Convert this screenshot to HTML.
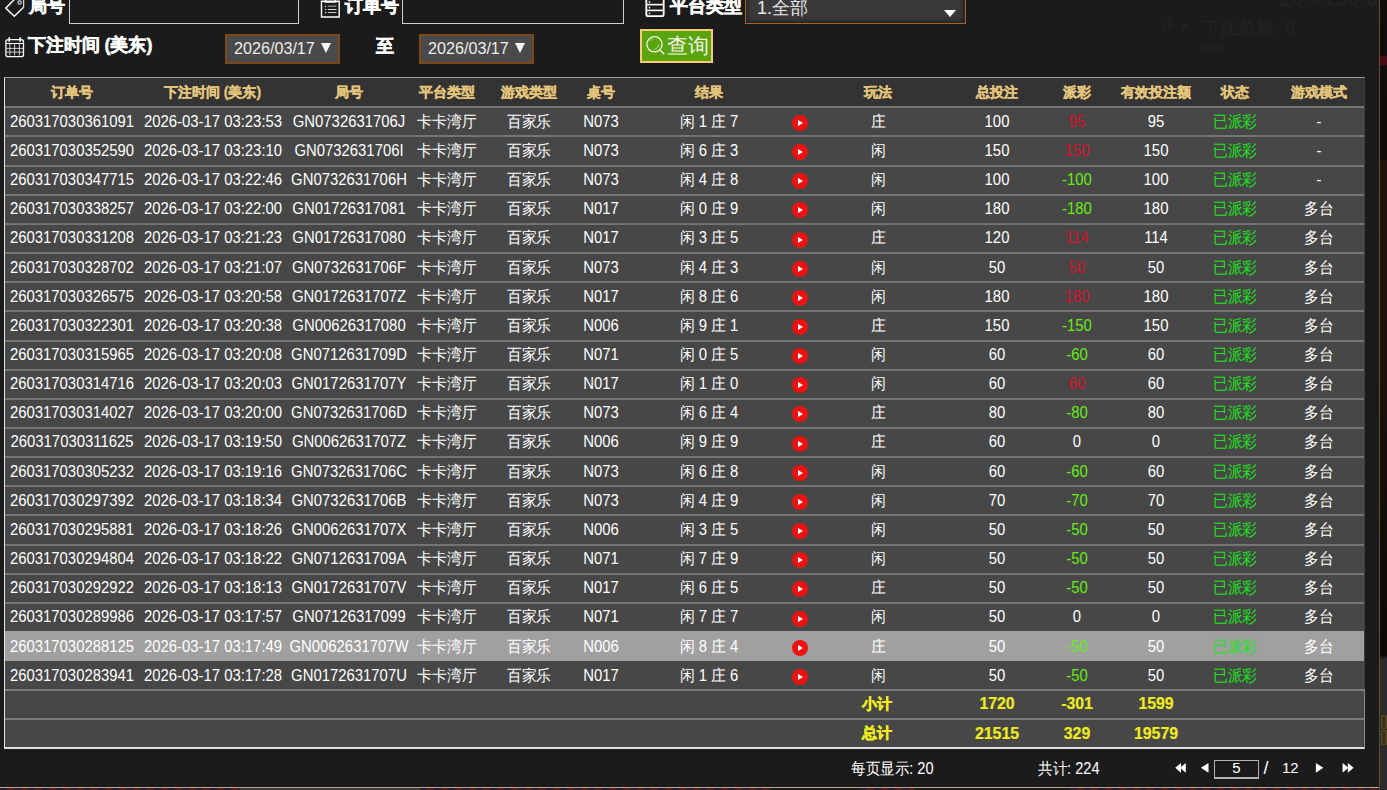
<!DOCTYPE html><html><head><meta charset="utf-8"><style>
html,body{margin:0;padding:0;}
body{width:1387px;height:790px;overflow:hidden;position:relative;background:#1b1b1b;font-family:"Liberation Sans",sans-serif;color:#fff;}
.abs{position:absolute;}
.lbl{position:absolute;font-weight:bold;font-size:18px;color:#fff;white-space:nowrap;line-height:20px;-webkit-text-stroke:0.5px #fff;}
.inp{position:absolute;border:1px solid #cfcfcf;background:#1b1b1b;box-sizing:border-box;}
.date{position:absolute;box-sizing:border-box;border:2px solid #7c4818;background:#4a4a4a;color:#eee;font-size:16px;line-height:26px;padding-left:8px;white-space:nowrap;}
#tbl{position:absolute;left:4px;top:77px;width:1361px;height:672px;box-sizing:border-box;border:1px solid #9a9a9a;border-left-color:#e6e6e6;border-bottom:2px solid #dedede;border-right:1px solid #3c3c3c;background:#474747;}
.hd{position:absolute;left:0;right:0;top:0;height:29px;background:#333;}
.row{position:absolute;left:0;right:0;height:29.15px;}
.sep{position:absolute;left:0;right:0;height:2px;background:#747474;}
.c{position:absolute;text-align:center;white-space:nowrap;font-size:16px;line-height:20px;transform:scaleX(0.93);}
.hd .c{transform:none}
.hd .c{color:#e3c47c;font-weight:bold;font-size:14px;-webkit-text-stroke:0.35px #e3c47c;}
.r{color:#d4122e}.g{color:#66ec16}.w{color:#fff}.st{color:#1ae41a}
.y{color:#f0ec1e;font-weight:bold}
.play{position:absolute;width:16px;height:16px;border-radius:50%;background:#ee1111;}
.play:after{content:"";position:absolute;left:6px;top:5px;border-left:5.5px solid #fff;border-top:3px solid transparent;border-bottom:3px solid transparent;}
</style></head><body>

<span class="abs" style="left:1279px;top:-14px;font-size:22px;font-weight:bold;color:#212121;white-space:nowrap">20 - 100,000</span>
<span class="abs" style="left:1202px;top:16px;font-size:18px;font-weight:bold;color:#212121;white-space:nowrap">下注总额: 0</span>
<span class="abs" style="left:1160px;top:16px;font-size:16px;font-weight:bold;color:#212121;white-space:nowrap">开 ●</span>
<span class="abs" style="left:1200px;top:42px;font-size:12px;font-weight:bold;color:#212121;white-space:nowrap">84%</span>
<svg class="abs" style="left:0;top:0" width="30" height="22" viewBox="0 0 30 22"><path d="M15.8 -2 L5.8 8.1 L14.3 16.3 L23.6 7.2" fill="none" stroke="#f4f4f4" stroke-width="1.5" stroke-linejoin="round"/><path d="M23.6 7.4 L23.6 -2" fill="none" stroke="#d8d8d8" stroke-width="1.3"/><circle cx="19.6" cy="2.6" r="1.7" fill="none" stroke="#ddd" stroke-width="1.1"/></svg>
<svg class="abs" style="left:315px;top:0" width="30" height="22" viewBox="315 0 30 22"><path d="M321.5 1.2 H339.2 V17 H321.5 Z" fill="none" stroke="#fff" stroke-width="1.4"/><path d="M325 2.2 Q325.5 0 327 -1 H334 Q335.5 0 336 2.2 Z" fill="none" stroke="#fff" stroke-width="1.2"/><g stroke-width="1.2" stroke-linecap="round"><line x1="328.3" y1="6.1" x2="336" y2="6.1" stroke="#999"/><line x1="328.3" y1="9.5" x2="336" y2="9.5" stroke="#ddd"/><line x1="328.3" y1="12.5" x2="336" y2="12.5" stroke="#ccc"/></g><circle cx="325.6" cy="6.2" r="0.8" fill="#ddd"/><circle cx="325.6" cy="9.5" r="0.8" fill="#ddd"/><circle cx="325.6" cy="12.6" r="0.8" fill="#ddd"/></svg>
<svg class="abs" style="left:640px;top:0" width="30" height="22" viewBox="640 0 30 22"><rect x="646.3" y="-3" width="17.4" height="19.2" rx="2" fill="none" stroke="#fff" stroke-width="1.8"/><line x1="646" y1="4.6" x2="664" y2="4.6" stroke="#fff" stroke-width="1.6"/><line x1="646" y1="10.4" x2="664" y2="10.4" stroke="#fff" stroke-width="1.6"/><circle cx="649.5" cy="2" r="0.9" fill="#ddd"/><circle cx="649.5" cy="7.5" r="0.9" fill="#ddd"/><circle cx="649.5" cy="13.3" r="0.9" fill="#ddd"/></svg>
<svg class="abs" style="left:0;top:30px" width="30" height="32" viewBox="0 30 30 32"><rect x="5.9" y="39.6" width="17.6" height="17" rx="2.2" fill="none" stroke="#fff" stroke-width="1.3"/><line x1="5.9" y1="43.5" x2="23.5" y2="43.5" stroke="#fff" stroke-width="1.1"/><line x1="9.2" y1="37.3" x2="9.2" y2="41.8" stroke="#fff" stroke-width="1.6"/><line x1="20.2" y1="37.3" x2="20.2" y2="41.8" stroke="#fff" stroke-width="1.6"/><g stroke="#ddd" stroke-width="0.9"><line x1="9.9" y1="44" x2="9.9" y2="55.5"/><line x1="14.6" y1="44" x2="14.6" y2="55.5"/><line x1="19.4" y1="44" x2="19.4" y2="55.5"/><line x1="6.5" y1="48.4" x2="23" y2="48.4"/><line x1="6.5" y1="52.1" x2="23" y2="52.1"/></g></svg>
<div class="inp" style="left:69px;top:-10px;width:230px;height:34px"></div>
<div class="inp" style="left:402px;top:-10px;width:221.5px;height:34px"></div>
<div class="lbl" style="left:29px;top:-4px">局号</div>
<div class="lbl" style="left:345px;top:-4px">订单号</div>
<div class="lbl" style="left:670px;top:-4px">平台类型</div>
<div class="lbl" style="left:27.5px;top:35px">下注时间 (美东)</div>
<div class="lbl" style="left:375.5px;top:36px">至</div>
<div class="date" style="left:225px;top:34px;width:115px;height:30px"><span class="abs" style="left:7px;top:1px;font-size:17px;line-height:24px;transform:scaleX(0.95);transform-origin:0 0;color:#ececec">2026/03/17</span><span class="abs" style="left:93.5px;top:7px;width:0;height:0;border-left:5.5px solid transparent;border-right:5.5px solid transparent;border-top:10.5px solid #f8f8f8"></span></div>
<div class="date" style="left:419px;top:34px;width:115px;height:30px"><span class="abs" style="left:7px;top:1px;font-size:17px;line-height:24px;transform:scaleX(0.95);transform-origin:0 0;color:#ececec">2026/03/17</span><span class="abs" style="left:93.5px;top:7px;width:0;height:0;border-left:5.5px solid transparent;border-right:5.5px solid transparent;border-top:10.5px solid #f8f8f8"></span></div>
<div class="abs" style="left:745px;top:-8px;width:221px;height:32px;box-sizing:border-box;border:1px solid #a0642a;background:#3a3a3a;box-shadow:inset 0 0 6px #111"><span class="abs" style="left:11px;top:5px;font-size:18px;line-height:20px;color:#e6e6e6">1.全部</span><span class="abs" style="left:198px;top:16.5px;width:0;height:0;border-left:6px solid transparent;border-right:6px solid transparent;border-top:7px solid #fff"></span></div>
<div class="abs" style="left:640px;top:29px;width:73px;height:34px;box-sizing:border-box;border:2px solid #ffc97c;background:#5aa40e;"><svg class="abs" style="left:0;top:0" width="69" height="30" viewBox="642 31 69 30"><circle cx="654.5" cy="44.3" r="7.6" fill="none" stroke="#f4f4e8" stroke-width="1.3"/><line x1="659.8" y1="49.8" x2="664.3" y2="54.3" stroke="#f4f4e8" stroke-width="1.4"/><path d="M650.5 40.8 Q651.5 39.5 653 39" fill="none" stroke="#dde8c8" stroke-width="0.8"/><path d="M659 44.5 Q658.5 48 654.5 49.5" fill="none" stroke="#dde8c8" stroke-width="0.8"/></svg><span class="abs" style="left:25px;top:1.5px;font-size:21px;line-height:26px;color:#f4f4e8">查询</span></div>
<div id="tbl">
<div class="hd">
<span class="c " style="top:4px;left:-33.50px;width:200px">订单号</span>
<span class="c " style="top:4px;left:107.50px;width:200px">下注时间 (美东)</span>
<span class="c " style="top:4px;left:244.00px;width:200px">局号</span>
<span class="c " style="top:4px;left:342.00px;width:200px">平台类型</span>
<span class="c " style="top:4px;left:424.00px;width:200px">游戏类型</span>
<span class="c " style="top:4px;left:496.00px;width:200px">桌号</span>
<span class="c " style="top:4px;left:604.00px;width:200px">结果</span>
<span class="c " style="top:4px;left:773.00px;width:200px">玩法</span>
<span class="c " style="top:4px;left:892.00px;width:200px">总投注</span>
<span class="c " style="top:4px;left:972.00px;width:200px">派彩</span>
<span class="c " style="top:4px;left:1051.00px;width:200px">有效投注额</span>
<span class="c " style="top:4px;left:1130.00px;width:200px">状态</span>
<span class="c " style="top:4px;left:1214.00px;width:200px">游戏模式</span>
</div>
<div class="row" style="top:28.30px;">
<span class="c " style="top:5.5px;left:-33.50px;width:200px">260317030361091</span>
<span class="c " style="top:5.5px;left:107.50px;width:200px">2026-03-17 03:23:53</span>
<span class="c " style="top:5.5px;left:244.00px;width:200px">GN0732631706J</span>
<span class="c " style="top:5.5px;left:342.00px;width:200px">卡卡湾厅</span>
<span class="c " style="top:5.5px;left:424.00px;width:200px">百家乐</span>
<span class="c " style="top:5.5px;left:496.00px;width:200px">N073</span>
<span class="c " style="top:5.5px;left:604.00px;width:200px">闲 1 庄 7</span>
<span class="play" style="left:787.0px;top:8.7px"></span>
<span class="c " style="top:5.5px;left:773.00px;width:200px">庄</span>
<span class="c " style="top:5.5px;left:892.00px;width:200px">100</span>
<span class="c r" style="top:5.5px;left:972.00px;width:200px">95</span>
<span class="c " style="top:5.5px;left:1051.00px;width:200px">95</span>
<span class="c st" style="top:5.5px;left:1130.00px;width:200px">已派彩</span>
<span class="c " style="top:5.5px;left:1214.00px;width:200px">-</span>
</div>
<div class="sep" style="top:28.30px"></div>
<div class="row" style="top:57.45px;">
<span class="c " style="top:5.5px;left:-33.50px;width:200px">260317030352590</span>
<span class="c " style="top:5.5px;left:107.50px;width:200px">2026-03-17 03:23:10</span>
<span class="c " style="top:5.5px;left:244.00px;width:200px">GN0732631706I</span>
<span class="c " style="top:5.5px;left:342.00px;width:200px">卡卡湾厅</span>
<span class="c " style="top:5.5px;left:424.00px;width:200px">百家乐</span>
<span class="c " style="top:5.5px;left:496.00px;width:200px">N073</span>
<span class="c " style="top:5.5px;left:604.00px;width:200px">闲 6 庄 3</span>
<span class="play" style="left:787.0px;top:8.7px"></span>
<span class="c " style="top:5.5px;left:773.00px;width:200px">闲</span>
<span class="c " style="top:5.5px;left:892.00px;width:200px">150</span>
<span class="c r" style="top:5.5px;left:972.00px;width:200px">150</span>
<span class="c " style="top:5.5px;left:1051.00px;width:200px">150</span>
<span class="c st" style="top:5.5px;left:1130.00px;width:200px">已派彩</span>
<span class="c " style="top:5.5px;left:1214.00px;width:200px">-</span>
</div>
<div class="sep" style="top:57.45px"></div>
<div class="row" style="top:86.60px;">
<span class="c " style="top:5.5px;left:-33.50px;width:200px">260317030347715</span>
<span class="c " style="top:5.5px;left:107.50px;width:200px">2026-03-17 03:22:46</span>
<span class="c " style="top:5.5px;left:244.00px;width:200px">GN0732631706H</span>
<span class="c " style="top:5.5px;left:342.00px;width:200px">卡卡湾厅</span>
<span class="c " style="top:5.5px;left:424.00px;width:200px">百家乐</span>
<span class="c " style="top:5.5px;left:496.00px;width:200px">N073</span>
<span class="c " style="top:5.5px;left:604.00px;width:200px">闲 4 庄 8</span>
<span class="play" style="left:787.0px;top:8.7px"></span>
<span class="c " style="top:5.5px;left:773.00px;width:200px">闲</span>
<span class="c " style="top:5.5px;left:892.00px;width:200px">100</span>
<span class="c g" style="top:5.5px;left:972.00px;width:200px">-100</span>
<span class="c " style="top:5.5px;left:1051.00px;width:200px">100</span>
<span class="c st" style="top:5.5px;left:1130.00px;width:200px">已派彩</span>
<span class="c " style="top:5.5px;left:1214.00px;width:200px">-</span>
</div>
<div class="sep" style="top:86.60px"></div>
<div class="row" style="top:115.75px;">
<span class="c " style="top:5.5px;left:-33.50px;width:200px">260317030338257</span>
<span class="c " style="top:5.5px;left:107.50px;width:200px">2026-03-17 03:22:00</span>
<span class="c " style="top:5.5px;left:244.00px;width:200px">GN01726317081</span>
<span class="c " style="top:5.5px;left:342.00px;width:200px">卡卡湾厅</span>
<span class="c " style="top:5.5px;left:424.00px;width:200px">百家乐</span>
<span class="c " style="top:5.5px;left:496.00px;width:200px">N017</span>
<span class="c " style="top:5.5px;left:604.00px;width:200px">闲 0 庄 9</span>
<span class="play" style="left:787.0px;top:8.7px"></span>
<span class="c " style="top:5.5px;left:773.00px;width:200px">闲</span>
<span class="c " style="top:5.5px;left:892.00px;width:200px">180</span>
<span class="c g" style="top:5.5px;left:972.00px;width:200px">-180</span>
<span class="c " style="top:5.5px;left:1051.00px;width:200px">180</span>
<span class="c st" style="top:5.5px;left:1130.00px;width:200px">已派彩</span>
<span class="c " style="top:5.5px;left:1214.00px;width:200px">多台</span>
</div>
<div class="sep" style="top:115.75px"></div>
<div class="row" style="top:144.90px;">
<span class="c " style="top:5.5px;left:-33.50px;width:200px">260317030331208</span>
<span class="c " style="top:5.5px;left:107.50px;width:200px">2026-03-17 03:21:23</span>
<span class="c " style="top:5.5px;left:244.00px;width:200px">GN01726317080</span>
<span class="c " style="top:5.5px;left:342.00px;width:200px">卡卡湾厅</span>
<span class="c " style="top:5.5px;left:424.00px;width:200px">百家乐</span>
<span class="c " style="top:5.5px;left:496.00px;width:200px">N017</span>
<span class="c " style="top:5.5px;left:604.00px;width:200px">闲 3 庄 5</span>
<span class="play" style="left:787.0px;top:8.7px"></span>
<span class="c " style="top:5.5px;left:773.00px;width:200px">庄</span>
<span class="c " style="top:5.5px;left:892.00px;width:200px">120</span>
<span class="c r" style="top:5.5px;left:972.00px;width:200px">114</span>
<span class="c " style="top:5.5px;left:1051.00px;width:200px">114</span>
<span class="c st" style="top:5.5px;left:1130.00px;width:200px">已派彩</span>
<span class="c " style="top:5.5px;left:1214.00px;width:200px">多台</span>
</div>
<div class="sep" style="top:144.90px"></div>
<div class="row" style="top:174.05px;">
<span class="c " style="top:5.5px;left:-33.50px;width:200px">260317030328702</span>
<span class="c " style="top:5.5px;left:107.50px;width:200px">2026-03-17 03:21:07</span>
<span class="c " style="top:5.5px;left:244.00px;width:200px">GN0732631706F</span>
<span class="c " style="top:5.5px;left:342.00px;width:200px">卡卡湾厅</span>
<span class="c " style="top:5.5px;left:424.00px;width:200px">百家乐</span>
<span class="c " style="top:5.5px;left:496.00px;width:200px">N073</span>
<span class="c " style="top:5.5px;left:604.00px;width:200px">闲 4 庄 3</span>
<span class="play" style="left:787.0px;top:8.7px"></span>
<span class="c " style="top:5.5px;left:773.00px;width:200px">闲</span>
<span class="c " style="top:5.5px;left:892.00px;width:200px">50</span>
<span class="c r" style="top:5.5px;left:972.00px;width:200px">50</span>
<span class="c " style="top:5.5px;left:1051.00px;width:200px">50</span>
<span class="c st" style="top:5.5px;left:1130.00px;width:200px">已派彩</span>
<span class="c " style="top:5.5px;left:1214.00px;width:200px">多台</span>
</div>
<div class="sep" style="top:174.05px"></div>
<div class="row" style="top:203.20px;">
<span class="c " style="top:5.5px;left:-33.50px;width:200px">260317030326575</span>
<span class="c " style="top:5.5px;left:107.50px;width:200px">2026-03-17 03:20:58</span>
<span class="c " style="top:5.5px;left:244.00px;width:200px">GN0172631707Z</span>
<span class="c " style="top:5.5px;left:342.00px;width:200px">卡卡湾厅</span>
<span class="c " style="top:5.5px;left:424.00px;width:200px">百家乐</span>
<span class="c " style="top:5.5px;left:496.00px;width:200px">N017</span>
<span class="c " style="top:5.5px;left:604.00px;width:200px">闲 8 庄 6</span>
<span class="play" style="left:787.0px;top:8.7px"></span>
<span class="c " style="top:5.5px;left:773.00px;width:200px">闲</span>
<span class="c " style="top:5.5px;left:892.00px;width:200px">180</span>
<span class="c r" style="top:5.5px;left:972.00px;width:200px">180</span>
<span class="c " style="top:5.5px;left:1051.00px;width:200px">180</span>
<span class="c st" style="top:5.5px;left:1130.00px;width:200px">已派彩</span>
<span class="c " style="top:5.5px;left:1214.00px;width:200px">多台</span>
</div>
<div class="sep" style="top:203.20px"></div>
<div class="row" style="top:232.35px;">
<span class="c " style="top:5.5px;left:-33.50px;width:200px">260317030322301</span>
<span class="c " style="top:5.5px;left:107.50px;width:200px">2026-03-17 03:20:38</span>
<span class="c " style="top:5.5px;left:244.00px;width:200px">GN00626317080</span>
<span class="c " style="top:5.5px;left:342.00px;width:200px">卡卡湾厅</span>
<span class="c " style="top:5.5px;left:424.00px;width:200px">百家乐</span>
<span class="c " style="top:5.5px;left:496.00px;width:200px">N006</span>
<span class="c " style="top:5.5px;left:604.00px;width:200px">闲 9 庄 1</span>
<span class="play" style="left:787.0px;top:8.7px"></span>
<span class="c " style="top:5.5px;left:773.00px;width:200px">庄</span>
<span class="c " style="top:5.5px;left:892.00px;width:200px">150</span>
<span class="c g" style="top:5.5px;left:972.00px;width:200px">-150</span>
<span class="c " style="top:5.5px;left:1051.00px;width:200px">150</span>
<span class="c st" style="top:5.5px;left:1130.00px;width:200px">已派彩</span>
<span class="c " style="top:5.5px;left:1214.00px;width:200px">多台</span>
</div>
<div class="sep" style="top:232.35px"></div>
<div class="row" style="top:261.50px;">
<span class="c " style="top:5.5px;left:-33.50px;width:200px">260317030315965</span>
<span class="c " style="top:5.5px;left:107.50px;width:200px">2026-03-17 03:20:08</span>
<span class="c " style="top:5.5px;left:244.00px;width:200px">GN0712631709D</span>
<span class="c " style="top:5.5px;left:342.00px;width:200px">卡卡湾厅</span>
<span class="c " style="top:5.5px;left:424.00px;width:200px">百家乐</span>
<span class="c " style="top:5.5px;left:496.00px;width:200px">N071</span>
<span class="c " style="top:5.5px;left:604.00px;width:200px">闲 0 庄 5</span>
<span class="play" style="left:787.0px;top:8.7px"></span>
<span class="c " style="top:5.5px;left:773.00px;width:200px">闲</span>
<span class="c " style="top:5.5px;left:892.00px;width:200px">60</span>
<span class="c g" style="top:5.5px;left:972.00px;width:200px">-60</span>
<span class="c " style="top:5.5px;left:1051.00px;width:200px">60</span>
<span class="c st" style="top:5.5px;left:1130.00px;width:200px">已派彩</span>
<span class="c " style="top:5.5px;left:1214.00px;width:200px">多台</span>
</div>
<div class="sep" style="top:261.50px"></div>
<div class="row" style="top:290.65px;">
<span class="c " style="top:5.5px;left:-33.50px;width:200px">260317030314716</span>
<span class="c " style="top:5.5px;left:107.50px;width:200px">2026-03-17 03:20:03</span>
<span class="c " style="top:5.5px;left:244.00px;width:200px">GN0172631707Y</span>
<span class="c " style="top:5.5px;left:342.00px;width:200px">卡卡湾厅</span>
<span class="c " style="top:5.5px;left:424.00px;width:200px">百家乐</span>
<span class="c " style="top:5.5px;left:496.00px;width:200px">N017</span>
<span class="c " style="top:5.5px;left:604.00px;width:200px">闲 1 庄 0</span>
<span class="play" style="left:787.0px;top:8.7px"></span>
<span class="c " style="top:5.5px;left:773.00px;width:200px">闲</span>
<span class="c " style="top:5.5px;left:892.00px;width:200px">60</span>
<span class="c r" style="top:5.5px;left:972.00px;width:200px">60</span>
<span class="c " style="top:5.5px;left:1051.00px;width:200px">60</span>
<span class="c st" style="top:5.5px;left:1130.00px;width:200px">已派彩</span>
<span class="c " style="top:5.5px;left:1214.00px;width:200px">多台</span>
</div>
<div class="sep" style="top:290.65px"></div>
<div class="row" style="top:319.80px;">
<span class="c " style="top:5.5px;left:-33.50px;width:200px">260317030314027</span>
<span class="c " style="top:5.5px;left:107.50px;width:200px">2026-03-17 03:20:00</span>
<span class="c " style="top:5.5px;left:244.00px;width:200px">GN0732631706D</span>
<span class="c " style="top:5.5px;left:342.00px;width:200px">卡卡湾厅</span>
<span class="c " style="top:5.5px;left:424.00px;width:200px">百家乐</span>
<span class="c " style="top:5.5px;left:496.00px;width:200px">N073</span>
<span class="c " style="top:5.5px;left:604.00px;width:200px">闲 6 庄 4</span>
<span class="play" style="left:787.0px;top:8.7px"></span>
<span class="c " style="top:5.5px;left:773.00px;width:200px">庄</span>
<span class="c " style="top:5.5px;left:892.00px;width:200px">80</span>
<span class="c g" style="top:5.5px;left:972.00px;width:200px">-80</span>
<span class="c " style="top:5.5px;left:1051.00px;width:200px">80</span>
<span class="c st" style="top:5.5px;left:1130.00px;width:200px">已派彩</span>
<span class="c " style="top:5.5px;left:1214.00px;width:200px">多台</span>
</div>
<div class="sep" style="top:319.80px"></div>
<div class="row" style="top:348.95px;">
<span class="c " style="top:5.5px;left:-33.50px;width:200px">260317030311625</span>
<span class="c " style="top:5.5px;left:107.50px;width:200px">2026-03-17 03:19:50</span>
<span class="c " style="top:5.5px;left:244.00px;width:200px">GN0062631707Z</span>
<span class="c " style="top:5.5px;left:342.00px;width:200px">卡卡湾厅</span>
<span class="c " style="top:5.5px;left:424.00px;width:200px">百家乐</span>
<span class="c " style="top:5.5px;left:496.00px;width:200px">N006</span>
<span class="c " style="top:5.5px;left:604.00px;width:200px">闲 9 庄 9</span>
<span class="play" style="left:787.0px;top:8.7px"></span>
<span class="c " style="top:5.5px;left:773.00px;width:200px">庄</span>
<span class="c " style="top:5.5px;left:892.00px;width:200px">60</span>
<span class="c w" style="top:5.5px;left:972.00px;width:200px">0</span>
<span class="c " style="top:5.5px;left:1051.00px;width:200px">0</span>
<span class="c st" style="top:5.5px;left:1130.00px;width:200px">已派彩</span>
<span class="c " style="top:5.5px;left:1214.00px;width:200px">多台</span>
</div>
<div class="sep" style="top:348.95px"></div>
<div class="row" style="top:378.10px;">
<span class="c " style="top:5.5px;left:-33.50px;width:200px">260317030305232</span>
<span class="c " style="top:5.5px;left:107.50px;width:200px">2026-03-17 03:19:16</span>
<span class="c " style="top:5.5px;left:244.00px;width:200px">GN0732631706C</span>
<span class="c " style="top:5.5px;left:342.00px;width:200px">卡卡湾厅</span>
<span class="c " style="top:5.5px;left:424.00px;width:200px">百家乐</span>
<span class="c " style="top:5.5px;left:496.00px;width:200px">N073</span>
<span class="c " style="top:5.5px;left:604.00px;width:200px">闲 6 庄 8</span>
<span class="play" style="left:787.0px;top:8.7px"></span>
<span class="c " style="top:5.5px;left:773.00px;width:200px">闲</span>
<span class="c " style="top:5.5px;left:892.00px;width:200px">60</span>
<span class="c g" style="top:5.5px;left:972.00px;width:200px">-60</span>
<span class="c " style="top:5.5px;left:1051.00px;width:200px">60</span>
<span class="c st" style="top:5.5px;left:1130.00px;width:200px">已派彩</span>
<span class="c " style="top:5.5px;left:1214.00px;width:200px">多台</span>
</div>
<div class="sep" style="top:378.10px"></div>
<div class="row" style="top:407.25px;">
<span class="c " style="top:5.5px;left:-33.50px;width:200px">260317030297392</span>
<span class="c " style="top:5.5px;left:107.50px;width:200px">2026-03-17 03:18:34</span>
<span class="c " style="top:5.5px;left:244.00px;width:200px">GN0732631706B</span>
<span class="c " style="top:5.5px;left:342.00px;width:200px">卡卡湾厅</span>
<span class="c " style="top:5.5px;left:424.00px;width:200px">百家乐</span>
<span class="c " style="top:5.5px;left:496.00px;width:200px">N073</span>
<span class="c " style="top:5.5px;left:604.00px;width:200px">闲 4 庄 9</span>
<span class="play" style="left:787.0px;top:8.7px"></span>
<span class="c " style="top:5.5px;left:773.00px;width:200px">闲</span>
<span class="c " style="top:5.5px;left:892.00px;width:200px">70</span>
<span class="c g" style="top:5.5px;left:972.00px;width:200px">-70</span>
<span class="c " style="top:5.5px;left:1051.00px;width:200px">70</span>
<span class="c st" style="top:5.5px;left:1130.00px;width:200px">已派彩</span>
<span class="c " style="top:5.5px;left:1214.00px;width:200px">多台</span>
</div>
<div class="sep" style="top:407.25px"></div>
<div class="row" style="top:436.40px;">
<span class="c " style="top:5.5px;left:-33.50px;width:200px">260317030295881</span>
<span class="c " style="top:5.5px;left:107.50px;width:200px">2026-03-17 03:18:26</span>
<span class="c " style="top:5.5px;left:244.00px;width:200px">GN0062631707X</span>
<span class="c " style="top:5.5px;left:342.00px;width:200px">卡卡湾厅</span>
<span class="c " style="top:5.5px;left:424.00px;width:200px">百家乐</span>
<span class="c " style="top:5.5px;left:496.00px;width:200px">N006</span>
<span class="c " style="top:5.5px;left:604.00px;width:200px">闲 3 庄 5</span>
<span class="play" style="left:787.0px;top:8.7px"></span>
<span class="c " style="top:5.5px;left:773.00px;width:200px">闲</span>
<span class="c " style="top:5.5px;left:892.00px;width:200px">50</span>
<span class="c g" style="top:5.5px;left:972.00px;width:200px">-50</span>
<span class="c " style="top:5.5px;left:1051.00px;width:200px">50</span>
<span class="c st" style="top:5.5px;left:1130.00px;width:200px">已派彩</span>
<span class="c " style="top:5.5px;left:1214.00px;width:200px">多台</span>
</div>
<div class="sep" style="top:436.40px"></div>
<div class="row" style="top:465.55px;">
<span class="c " style="top:5.5px;left:-33.50px;width:200px">260317030294804</span>
<span class="c " style="top:5.5px;left:107.50px;width:200px">2026-03-17 03:18:22</span>
<span class="c " style="top:5.5px;left:244.00px;width:200px">GN0712631709A</span>
<span class="c " style="top:5.5px;left:342.00px;width:200px">卡卡湾厅</span>
<span class="c " style="top:5.5px;left:424.00px;width:200px">百家乐</span>
<span class="c " style="top:5.5px;left:496.00px;width:200px">N071</span>
<span class="c " style="top:5.5px;left:604.00px;width:200px">闲 7 庄 9</span>
<span class="play" style="left:787.0px;top:8.7px"></span>
<span class="c " style="top:5.5px;left:773.00px;width:200px">闲</span>
<span class="c " style="top:5.5px;left:892.00px;width:200px">50</span>
<span class="c g" style="top:5.5px;left:972.00px;width:200px">-50</span>
<span class="c " style="top:5.5px;left:1051.00px;width:200px">50</span>
<span class="c st" style="top:5.5px;left:1130.00px;width:200px">已派彩</span>
<span class="c " style="top:5.5px;left:1214.00px;width:200px">多台</span>
</div>
<div class="sep" style="top:465.55px"></div>
<div class="row" style="top:494.70px;">
<span class="c " style="top:5.5px;left:-33.50px;width:200px">260317030292922</span>
<span class="c " style="top:5.5px;left:107.50px;width:200px">2026-03-17 03:18:13</span>
<span class="c " style="top:5.5px;left:244.00px;width:200px">GN0172631707V</span>
<span class="c " style="top:5.5px;left:342.00px;width:200px">卡卡湾厅</span>
<span class="c " style="top:5.5px;left:424.00px;width:200px">百家乐</span>
<span class="c " style="top:5.5px;left:496.00px;width:200px">N017</span>
<span class="c " style="top:5.5px;left:604.00px;width:200px">闲 6 庄 5</span>
<span class="play" style="left:787.0px;top:8.7px"></span>
<span class="c " style="top:5.5px;left:773.00px;width:200px">庄</span>
<span class="c " style="top:5.5px;left:892.00px;width:200px">50</span>
<span class="c g" style="top:5.5px;left:972.00px;width:200px">-50</span>
<span class="c " style="top:5.5px;left:1051.00px;width:200px">50</span>
<span class="c st" style="top:5.5px;left:1130.00px;width:200px">已派彩</span>
<span class="c " style="top:5.5px;left:1214.00px;width:200px">多台</span>
</div>
<div class="sep" style="top:494.70px"></div>
<div class="row" style="top:523.85px;">
<span class="c " style="top:5.5px;left:-33.50px;width:200px">260317030289986</span>
<span class="c " style="top:5.5px;left:107.50px;width:200px">2026-03-17 03:17:57</span>
<span class="c " style="top:5.5px;left:244.00px;width:200px">GN07126317099</span>
<span class="c " style="top:5.5px;left:342.00px;width:200px">卡卡湾厅</span>
<span class="c " style="top:5.5px;left:424.00px;width:200px">百家乐</span>
<span class="c " style="top:5.5px;left:496.00px;width:200px">N071</span>
<span class="c " style="top:5.5px;left:604.00px;width:200px">闲 7 庄 7</span>
<span class="play" style="left:787.0px;top:8.7px"></span>
<span class="c " style="top:5.5px;left:773.00px;width:200px">闲</span>
<span class="c " style="top:5.5px;left:892.00px;width:200px">50</span>
<span class="c w" style="top:5.5px;left:972.00px;width:200px">0</span>
<span class="c " style="top:5.5px;left:1051.00px;width:200px">0</span>
<span class="c st" style="top:5.5px;left:1130.00px;width:200px">已派彩</span>
<span class="c " style="top:5.5px;left:1214.00px;width:200px">多台</span>
</div>
<div class="sep" style="top:523.85px"></div>
<div class="row" style="top:553.00px;background:#a0a0a0;height:29.9px;">
<span class="c " style="top:5.5px;left:-33.50px;width:200px">260317030288125</span>
<span class="c " style="top:5.5px;left:107.50px;width:200px">2026-03-17 03:17:49</span>
<span class="c " style="top:5.5px;left:244.00px;width:200px">GN0062631707W</span>
<span class="c " style="top:5.5px;left:342.00px;width:200px">卡卡湾厅</span>
<span class="c " style="top:5.5px;left:424.00px;width:200px">百家乐</span>
<span class="c " style="top:5.5px;left:496.00px;width:200px">N006</span>
<span class="c " style="top:5.5px;left:604.00px;width:200px">闲 8 庄 4</span>
<span class="play" style="left:787.0px;top:8.7px"></span>
<span class="c " style="top:5.5px;left:773.00px;width:200px">庄</span>
<span class="c " style="top:5.5px;left:892.00px;width:200px">50</span>
<span class="c g" style="top:5.5px;left:972.00px;width:200px">-50</span>
<span class="c " style="top:5.5px;left:1051.00px;width:200px">50</span>
<span class="c st" style="top:5.5px;left:1130.00px;width:200px">已派彩</span>
<span class="c " style="top:5.5px;left:1214.00px;width:200px">多台</span>
</div>
<div class="row" style="top:582.15px;">
<span class="c " style="top:5.5px;left:-33.50px;width:200px">260317030283941</span>
<span class="c " style="top:5.5px;left:107.50px;width:200px">2026-03-17 03:17:28</span>
<span class="c " style="top:5.5px;left:244.00px;width:200px">GN0172631707U</span>
<span class="c " style="top:5.5px;left:342.00px;width:200px">卡卡湾厅</span>
<span class="c " style="top:5.5px;left:424.00px;width:200px">百家乐</span>
<span class="c " style="top:5.5px;left:496.00px;width:200px">N017</span>
<span class="c " style="top:5.5px;left:604.00px;width:200px">闲 1 庄 6</span>
<span class="play" style="left:787.0px;top:8.7px"></span>
<span class="c " style="top:5.5px;left:773.00px;width:200px">闲</span>
<span class="c " style="top:5.5px;left:892.00px;width:200px">50</span>
<span class="c g" style="top:5.5px;left:972.00px;width:200px">-50</span>
<span class="c " style="top:5.5px;left:1051.00px;width:200px">50</span>
<span class="c st" style="top:5.5px;left:1130.00px;width:200px">已派彩</span>
<span class="c " style="top:5.5px;left:1214.00px;width:200px">多台</span>
</div>
<div class="sep" style="top:611.30px;background:#7a7a7a"></div>
<div class="abs" style="right:-1px;top:611.30px;width:1px;height:30px;background:#8a8a8a"></div>
<div class="row" style="top:611.30px">
<span class="c y" style="top:4.5px;font-size:15px;transform:none;-webkit-text-stroke:0.5px #f0ec1e;left:772.00px;width:200px">小计</span>
<span class="c y" style="top:5.2px;font-size:16px;transform:scaleX(0.99);-webkit-text-stroke:0.2px #f0ec1e;left:892.00px;width:200px">1720</span>
<span class="c y" style="top:5.2px;font-size:16px;transform:scaleX(0.99);-webkit-text-stroke:0.2px #f0ec1e;left:972.00px;width:200px">-301</span>
<span class="c y" style="top:5.2px;font-size:16px;transform:scaleX(0.99);-webkit-text-stroke:0.2px #f0ec1e;left:1051.00px;width:200px">1599</span>
</div>
<div class="sep" style="top:640.45px;background:#7a7a7a"></div>
<div class="abs" style="right:-1px;top:640.45px;width:1px;height:30px;background:#8a8a8a"></div>
<div class="row" style="top:640.45px">
<span class="c y" style="top:4.5px;font-size:15px;transform:none;-webkit-text-stroke:0.5px #f0ec1e;left:772.00px;width:200px">总计</span>
<span class="c y" style="top:5.2px;font-size:16px;transform:scaleX(0.99);-webkit-text-stroke:0.2px #f0ec1e;left:892.00px;width:200px">21515</span>
<span class="c y" style="top:5.2px;font-size:16px;transform:scaleX(0.99);-webkit-text-stroke:0.2px #f0ec1e;left:972.00px;width:200px">329</span>
<span class="c y" style="top:5.2px;font-size:16px;transform:scaleX(0.99);-webkit-text-stroke:0.2px #f0ec1e;left:1051.00px;width:200px">19579</span>
</div>
</div>
<span class="abs" style="left:850.5px;top:758.5px;font-size:16px;line-height:20px;transform:scaleX(0.91);transform-origin:0 0;color:#fff;white-space:nowrap">每页显示: 20</span>
<span class="abs" style="left:1038px;top:758.5px;font-size:16px;line-height:20px;transform:scaleX(0.91);transform-origin:0 0;color:#fff;white-space:nowrap">共计: 224</span>
<div class="abs" style="left:1214px;top:760px;width:45px;height:19px;box-sizing:border-box;border:1px solid #b4b4b4;border-bottom-width:2px;color:#fff;font-size:15px;line-height:14px;text-align:center">5</div>
<span class="abs" style="left:1263.5px;top:758px;font-size:18px;color:#fff;white-space:nowrap">/</span><span class="abs" style="left:1282px;top:759px;font-size:15px;color:#fff;white-space:nowrap">12</span>
<svg class="abs" style="left:1170px;top:758px" width="190" height="22" viewBox="1170 758 190 22"><g fill="#fff"><path d="M1175.2 767.8 L1181 762.9 L1181 772.7 Z"/><path d="M1180 767.8 L1185.8 762.9 L1185.8 772.7 Z"/><path d="M1200.9 767.8 L1208.5 762.9 L1208.5 772.7 Z"/><path d="M1323.3 767.8 L1315.9 762.9 L1315.9 772.7 Z"/><path d="M1348.4 767.8 L1342.6 762.9 L1342.6 772.7 Z"/><path d="M1353.6 767.8 L1347.8 762.9 L1347.8 772.7 Z"/></g></svg>
<div class="abs" style="left:1379px;top:0;width:8px;height:790px;background:linear-gradient(#120e0a 0,#100b07 160px,#1e150a 161px,#1a1209 400px,#0c0806 655px,#2c2b2a 659px,#2c2b2a 790px);border-left:1px solid #5e4c36;box-sizing:border-box"></div>
<div class="abs" style="left:1381px;top:715px;width:6px;height:14px;border:2px solid #4e4618;box-sizing:border-box"></div><div class="abs" style="left:1381px;top:730px;width:6px;height:15px;border:2px solid #4e4618;box-sizing:border-box"></div>
<div class="abs" style="left:1380px;top:56px;width:7px;height:9px;background:#4a0a12"></div>
<div class="abs" style="left:0;top:787px;width:1379px;height:1px;background:#b8a88c"></div>
<div class="abs" style="left:0px;top:788px;width:240px;height:2px;background:repeating-linear-gradient(90deg,#2a1a3a 0 7px,#5a1a1a 7px 14px)"></div>
<div class="abs" style="left:420px;top:788px;width:350px;height:2px;background:repeating-linear-gradient(90deg,#2a1a3a 0 7px,#5a1a1a 7px 14px)"></div>
<div class="abs" style="left:860px;top:788px;width:55px;height:2px;background:repeating-linear-gradient(90deg,#2a1a3a 0 7px,#5a1a1a 7px 14px)"></div>
<div class="abs" style="left:1070px;top:788px;width:309px;height:2px;background:repeating-linear-gradient(90deg,#2a1a3a 0 7px,#5a1a1a 7px 14px)"></div>
<div class="abs" style="left:240px;top:788px;width:180px;height:2px;background:#3a3a3a"></div>
</body></html>
